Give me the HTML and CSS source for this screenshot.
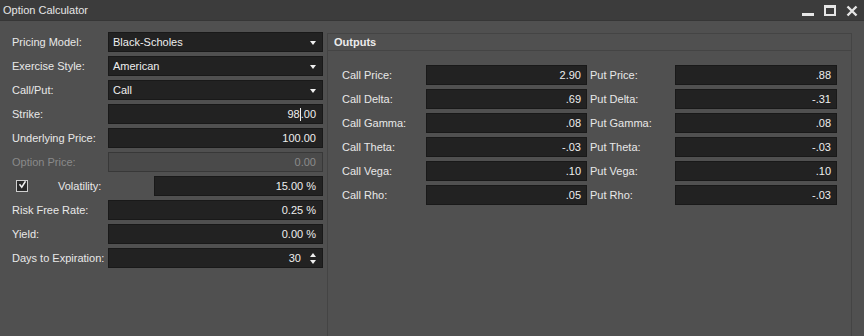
FILE: index.html
```html
<!DOCTYPE html>
<html>
<head>
<meta charset="utf-8">
<link rel="stylesheet" href="styles.css">
</head>
<body>
<div class="window">
  <div class="titlebar">
    <span class="title">Option Calculator</span>
    <div class="controls">
      <svg width="12" height="12" viewBox="0 0 12 12"><rect x="0" y="8" width="12" height="3" fill="#e6e6e6"/></svg>
      <svg width="12" height="12" viewBox="0 0 12 12"><rect x="1" y="1" width="10" height="9" fill="none" stroke="#e6e6e6" stroke-width="2"/><rect x="0" y="0" width="12" height="3" fill="#e6e6e6"/></svg>
      <svg width="12" height="12" viewBox="0 0 12 12"><path d="M1.5 1.5 L10.5 10.5 M10.5 1.5 L1.5 10.5" stroke="#e6e6e6" stroke-width="2.4"/></svg>
    </div>
  </div>
  <div class="main">
    <div class="inputs">
      <div class="row"><span class="lbl">Pricing Model:</span><div class="field select">Black-Scholes<span class="arrow"></span></div></div>
      <div class="row"><span class="lbl">Exercise Style:</span><div class="field select">American<span class="arrow"></span></div></div>
      <div class="row"><span class="lbl">Call/Put:</span><div class="field select">Call<span class="arrow"></span></div></div>
      <div class="row"><span class="lbl">Strike:</span><div class="field num">98<span class="caret"></span>.00</div></div>
      <div class="row"><span class="lbl">Underlying Price:</span><div class="field num">100.00</div></div>
      <div class="row"><span class="lbl disabled">Option Price:</span><div class="field num off">0.00</div></div>
      <div class="row vol"><span class="check"><svg width="12" height="12" viewBox="0 0 12 12"><path d="M2 5 L5 9 L10 1" fill="none" stroke="#f2f2f2" stroke-width="2"/></svg></span><span class="lbl vlbl">Volatility:</span><div class="field num">15.00 %</div></div>
      <div class="row"><span class="lbl">Risk Free Rate:</span><div class="field num">0.25 %</div></div>
      <div class="row"><span class="lbl">Yield:</span><div class="field num">0.00 %</div></div>
      <div class="row"><span class="lbl">Days to Expiration:</span><div class="field num spin">30<span class="spinner"><span class="up"></span><span class="dn"></span></span></div></div>
    </div>
    <div class="outputs">
      <div class="ohead">Outputs</div>
      <div class="ogrid">
        <span class="lbl clbl">Call Price:</span><div class="field num">2.90</div><span class="lbl plbl">Put Price:</span><div class="field num">.88</div>
        <span class="lbl clbl">Call Delta:</span><div class="field num">.69</div><span class="lbl plbl">Put Delta:</span><div class="field num">-.31</div>
        <span class="lbl clbl">Call Gamma:</span><div class="field num">.08</div><span class="lbl plbl">Put Gamma:</span><div class="field num">.08</div>
        <span class="lbl clbl">Call Theta:</span><div class="field num">-.03</div><span class="lbl plbl">Put Theta:</span><div class="field num">-.03</div>
        <span class="lbl clbl">Call Vega:</span><div class="field num">.10</div><span class="lbl plbl">Put Vega:</span><div class="field num">.10</div>
        <span class="lbl clbl">Call Rho:</span><div class="field num">.05</div><span class="lbl plbl">Put Rho:</span><div class="field num">-.03</div>
      </div>
    </div>
  </div>
</div>
</body>
</html>
```

FILE: styles.css
```css
* { box-sizing: border-box; }
html, body { margin: 0; padding: 0; }
body {
  width: 864px;
  height: 336px;
  overflow: hidden;
  background: #505050;
  font-family: "Liberation Sans", Arial, sans-serif;
  font-size: 11px;
  color: #e8e8e8;
}
.window { height: 336px; display: flex; flex-direction: column; }
.titlebar {
  height: 21px;
  background: #3c3c3c;
  border-bottom: 1px solid #363636;
  display: flex;
  align-items: center;
  justify-content: space-between;
  padding-left: 3px;
  padding-right: 6px;
  flex-shrink: 0;
}
.title { font-size: 11px; color: #e6e6e6; }
.controls { display: flex; gap: 10px; align-items: center; padding-top: 2px; }
.main { flex: 1; display: flex; padding-top: 11px; min-height: 0; }
.inputs {
  width: 327px;
  padding-left: 12px;
  padding-right: 4px;
  display: flex;
  flex-direction: column;
  gap: 4px;
  flex-shrink: 0;
}
.row { display: flex; align-items: center; height: 20px; }
.row .lbl { width: 96px; flex-shrink: 0; }
.lbl { white-space: nowrap; color: #e8e8e8; }
.lbl.disabled { color: #8a8a8a; }
.field {
  flex: 1;
  height: 20px;
  background: #222222;
  border: 1px solid #191919;
  display: flex;
  align-items: center;
  padding: 0 4px;
  position: relative;
  color: #eeeeee;
}
.field.num { justify-content: flex-end; padding-right: 6px; }
.field.off { background: #4a4a4a; border-color: #383838; color: #8a8a8a; }
.select .arrow {
  position: absolute;
  right: 6px;
  top: 8px;
  width: 0; height: 0;
  border-left: 3px solid transparent;
  border-right: 3px solid transparent;
  border-top: 4px solid #f0f0f0;
}
.caret { display: inline-block; width: 1px; height: 13px; background: #f0f0f0; }
.row.vol .check {
  width: 12px; height: 12px;
  margin-left: 4px;
  background: #2a2a2a;
  border: 1px solid #cfcfcf;
  display: flex; align-items: center; justify-content: center;
  flex-shrink: 0;
}
.row.vol .check svg { margin-top: -3px; margin-left: 1px; }
.row.vol .vlbl { width: 126px; padding-left: 30px; }
.field.spin { padding-right: 4px; }
.spinner { display: flex; flex-direction: column; gap: 3px; margin-left: 9px; margin-right: 2px; }
.spinner .up { width: 0; height: 0; border-left: 3px solid transparent; border-right: 3px solid transparent; border-bottom: 4px solid #f0f0f0; }
.spinner .dn { width: 0; height: 0; border-left: 3px solid transparent; border-right: 3px solid transparent; border-top: 4px solid #f0f0f0; }
.outputs {
  width: 525px;
  margin-top: 1px;
  border: 1px solid #444444;
  border-bottom: none;
  display: flex;
  flex-direction: column;
}
.ohead {
  height: 17px;
  border-bottom: 1px solid #444444;
  font-weight: bold;
  font-size: 11px;
  padding-left: 6px;
  display: flex;
  align-items: center;
  color: #ececec;
}
.ogrid {
  padding: 14px 0 0 13px;
  display: grid;
  grid-template-columns: 85px 161px 88px 162px;
  grid-auto-rows: 20px;
  row-gap: 4px;
  align-items: center;
}
.ogrid .clbl { padding-left: 1px; }
.ogrid .plbl { padding-left: 3px; }
.ogrid .field.num { padding-right: 5px; }
```
